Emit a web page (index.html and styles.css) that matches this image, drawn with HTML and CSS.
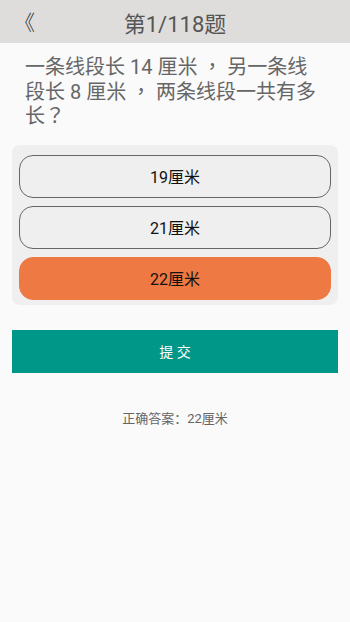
FILE: index.html
```html
<!DOCTYPE html>
<html>
<head>
    <title>答题</title>
    <link rel="stylesheet" href="styles.css">
</head>
<body>
    <div class="topbar">
        <span class="back">《</span>
        <span class="title">第1/118题</span>
    </div>

    <div class="question">一条线段长 14 厘米 ， 另一条线段长 8 厘米 ， 两条线段一共有多长？</div>

    <div class="options">
        <div class="option">19厘米</div>
        <div class="option">21厘米</div>
        <div class="option selected">22厘米</div>
    </div>

    <button class="submit">提 交</button>

    <div class="answer">正确答案：22厘米</div>
</body>
</html>
```

FILE: styles.css
```css
* {
    margin: 0;
    padding: 0;
    box-sizing: border-box;
}

body {
    width: 350px;
    height: 622px;
    background-color: #fafafa;
    font-family: Roboto, "Noto Sans CJK SC", sans-serif;
}

.topbar {
    height: 43px;
    background-color: #dedddc;
    display: flex;
    align-items: center;
    justify-content: center;
    position: relative;
}

.back {
    position: absolute;
    left: 14px;
    top: 6px;
    font-size: 21px;
    font-weight: 300;
    color: #333;
}

.title {
    font-size: 22px;
    color: #555;
}

.question {
    padding: 12px 30px 0 25px;
    font-family: Roboto, "Noto Sans CJK TC", sans-serif;
    font-size: 20px;
    line-height: 24.5px;
    color: #666;
}

.options {
    margin: 16px 12px 0;
    padding: 10px 7px 5px;
    background-color: #efefef;
    border-radius: 8px;
    display: flex;
    flex-direction: column;
    gap: 8px;
}

.option {
    height: 43px;
    border: 1px solid #666;
    border-radius: 14px;
    display: flex;
    align-items: center;
    justify-content: center;
    font-size: 16px;
    color: #111;
}

.option.selected {
    background-color: #ef7942;
    border-color: #ef7942;
}

.submit {
    display: block;
    width: 326px;
    height: 43px;
    margin: 25px 12px 0;
    border: none;
    background-color: #009688;
    color: #fff;
    font-size: 14px;
    font-family: Roboto, "Noto Sans CJK SC", sans-serif;
}

.answer {
    margin-top: 35px;
    text-align: center;
    font-size: 13px;
    color: #666;
}
```
